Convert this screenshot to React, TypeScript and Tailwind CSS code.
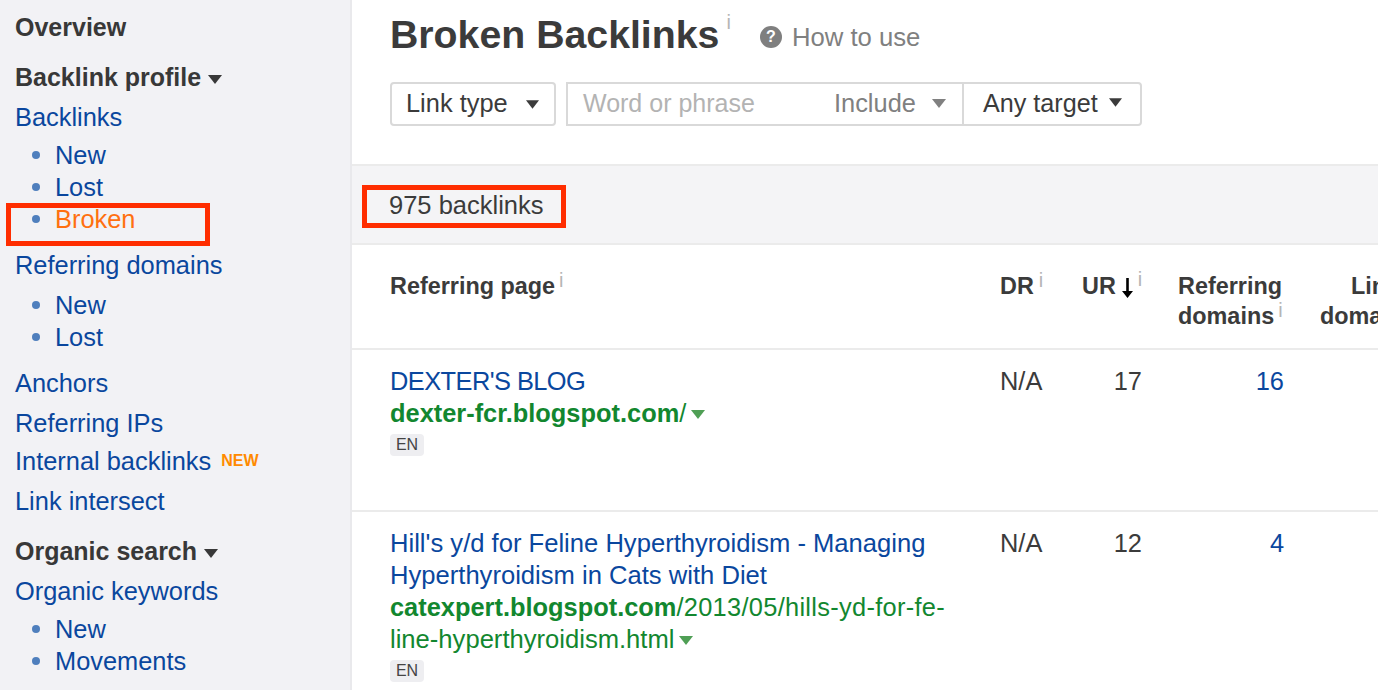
const font = "[font-family:'Liberation_Sans',Arial,sans-serif]";

function Caret({ className }: { className: string }) {
  return (
    <svg viewBox="0 0 14 9" className={className}>
      <path d="M0 0h14L7 9z" fill="currentColor" />
    </svg>
  );
}

function Info({ className = "" }: { className?: string }) {
  return (
    <span className={`text-[20px] font-normal leading-none text-[#b5b5b5] ${className}`}>i</span>
  );
}

function SideHead({ label, mt, caret }: { label: string; mt: string; caret?: boolean }) {
  return (
    <div className={`flex h-8 items-center gap-[7px] pt-[2px] text-[25px] font-bold text-[#383838] ${mt}`}>
      {label}
      {caret && <Caret className="mt-[2px] h-[9px] w-[14px]" />}
    </div>
  );
}

function SideLink({ label, mt, badge }: { label: string; mt: string; badge?: boolean }) {
  return (
    <div className={`flex h-8 items-center text-[25.4px] text-[#0a479e] ${mt}`}>
      {label}
      {badge && <span className="ml-[10px] text-[16px] font-bold text-[#ff8a00]">NEW</span>}
    </div>
  );
}

function SubLink({ label, mt = "", active }: { label: string; mt?: string; active?: boolean }) {
  return (
    <div className={`flex h-8 items-center pl-[17px] text-[25.4px] ${mt} ${active ? "text-[#ff7010]" : "text-[#0a479e]"}`}>
      <span className="mr-[15px] h-[8px] w-[8px] rounded-full bg-[#4f7fbd]" />
      {label}
    </div>
  );
}

function Sidebar() {
  return (
    <aside className="relative h-[690px] w-[352px] shrink-0 border-r-2 border-[#e9e9ec] bg-[#f2f2f5] pl-[15px] pt-[11px]">
      <SideHead label="Overview" mt="" />
      <SideHead label="Backlink profile" mt="mt-[18px]" caret />
      <SideLink label="Backlinks" mt="mt-2" />
      <SubLink label="New" mt="mt-[6px]" />
      <SubLink label="Lost" />
      <SubLink label="Broken" active />
      <SideLink label="Referring domains" mt="mt-[14px]" />
      <SubLink label="New" mt="mt-2" />
      <SubLink label="Lost" />
      <SideLink label="Anchors" mt="mt-[14px]" />
      <SideLink label="Referring IPs" mt="mt-2" />
      <SideLink label="Internal backlinks" mt="mt-[6px]" badge />
      <SideLink label="Link intersect" mt="mt-2" />
      <SideHead label="Organic search" mt="mt-[18px]" caret />
      <SideLink label="Organic keywords" mt="mt-2" />
      <SubLink label="New" mt="mt-[6px]" />
      <SubLink label="Movements" />
      <div className="absolute left-[6px] top-[203px] h-[43px] w-[204px] border-[5px] border-[#ff2d00]" />
    </aside>
  );
}

function Filters() {
  return (
    <div className="mt-[21px] flex gap-[10px] pl-[38px] text-[25.4px]">
      <div className="flex h-11 w-[166px] items-center rounded-[4px] border-2 border-[#d9d9d9] pb-[2px] pl-[14px] text-[#3b3b3b]">
        Link type
        <Caret className="ml-[18px] mt-[3px] h-[9px] w-[13px]" />
      </div>
      <div className="flex h-11 w-[576px] items-center rounded-r-[4px] border-2 border-[#d9d9d9]">
        <span className="w-[266px] pl-[15px] text-[25px] text-[#b3b3b3]">Word or phrase</span>
        <span className="pb-[1px] text-[#808080]">Include</span>
        <Caret className="ml-[15px] mb-[2px] h-[9px] w-[16px] text-[#808080]" />
        <div className="ml-[15px] flex h-full items-center border-l-2 border-[#d9d9d9] pl-[19px] text-[25.2px] text-[#3b3b3b]">
          Any target
          <Caret className="ml-[11px] mb-[4px] h-[9px] w-[13px]" />
        </div>
      </div>
    </div>
  );
}

function Lang() {
  return (
    <span className="mt-[5px] flex h-[22px] w-[34px] items-center justify-center rounded-[4px] bg-[#eeeef1] text-[16px] text-[#444]">
      EN
    </span>
  );
}

function Row({
  h,
  ur,
  refDomains,
  children,
}: {
  h: string;
  ur: number;
  refDomains: number;
  children: React.ReactNode;
}) {
  return (
    <div className={`flex border-b-2 border-[#ebebeb] pt-[15px] text-[25.4px] leading-8 text-[#3b3b3b] ${h}`}>
      <div className="w-[648px] shrink-0 pl-[38px]">{children}</div>
      <div className="w-[82px] shrink-0">N/A</div>
      <div className="w-[60px] shrink-0 text-right">{ur}</div>
      <div className="w-[142px] shrink-0 text-right text-[#0a479e]">{refDomains}</div>
    </div>
  );
}

function Table() {
  return (
    <>
      <div className="flex h-[105px] border-b-2 border-[#ebebeb] pt-[26px] text-[23.4px] font-bold leading-[30px] text-[#3b3b3b]">
        <div className="w-[648px] shrink-0 pl-[38px]">
          Referring page<Info className="relative -top-[7px] ml-[4px]" />
        </div>
        <div className="w-[82px] shrink-0">
          DR<Info className="relative -top-[7px] ml-[5px]" />
        </div>
        <div className="flex w-[96px] shrink-0 items-start">
          UR
          <svg viewBox="0 0 11 20" className="ml-[6px] mt-[7px] h-[20px] w-[11px] text-black">
            <path d="M4.2 0h2.6v13H11l-5.5 7L0 13h4.2z" fill="currentColor" />
          </svg>
          <Info className="relative -top-[2px] ml-[5px]" />
        </div>
        <div className="w-[142px] shrink-0">
          Referring
          <br />
          domains<Info className="relative -top-[7px] ml-[4px]" />
        </div>
        <div className="w-[120px] shrink-0 whitespace-nowrap">
          <div className="pl-[31px]">Linked</div>
          <div>domains</div>
        </div>
      </div>
      <Row h="h-[162px]" ur={17} refDomains={16}>
        <div className="tracking-[-0.55px] text-[#0a479e]">DEXTER'S BLOG</div>
        <div className="flex items-center text-[#12872f]">
          <span className="font-bold">dexter-fcr.blogspot.com</span>/
          <Caret className="ml-[5px] mt-[2px] h-[9px] w-[14px] text-[#4f9f55]" />
        </div>
        <Lang />
      </Row>
      <Row h="h-[200px]" ur={12} refDomains={4}>
        <div className="text-[25.6px] text-[#0a479e]">
          Hill's y/d for Feline Hyperthyroidism - Managing
          <br />
          Hyperthyroidism in Cats with Diet
        </div>
        <div className="text-[#12872f]">
          <span className="font-bold">catexpert.blogspot.com</span>
          <span className="tracking-[0.3px]">/2013/05/hills-yd-for-fe-</span>
        </div>
        <div className="flex items-center text-[25.6px] text-[#12872f]">
          line-hyperthyroidism.html
          <Caret className="ml-[5px] mt-[2px] h-[9px] w-[14px] text-[#4f9f55]" />
        </div>
        <Lang />
      </Row>
    </>
  );
}

export default function App() {
  return (
    <div className={`flex h-[690px] w-[1378px] overflow-hidden bg-white ${font}`}>
      <Sidebar />
      <main className="min-w-0 flex-1 overflow-hidden">
        <div className="flex h-[61px] items-center pl-[38px] pt-[8px]">
          <h1 className="text-[39.25px] font-bold leading-none text-[#3b3b3b]">Broken Backlinks</h1>
          <Info className="mb-[26px] ml-[7px]" />
          <span className="ml-[29px] mt-[5px] flex h-[22px] w-[22px] items-center justify-center rounded-full bg-[#7f7f7f] text-[16px] font-bold text-white">
            ?
          </span>
          <span className="ml-[10px] mt-[5px] text-[25.7px] text-[#808080]">How to use</span>
        </div>
        <Filters />
        <div className="relative mt-[38px] flex h-[81px] items-center border-y-2 border-[#ebebeb] bg-[#f4f4f6] pl-[37px] pt-[2px] text-[25.5px] text-[#3b3b3b]">
          975 backlinks
          <div className="absolute left-[10px] top-[19px] h-[43px] w-[204px] border-[5px] border-[#ff2d00]" />
        </div>
        <Table />
      </main>
    </div>
  );
}
